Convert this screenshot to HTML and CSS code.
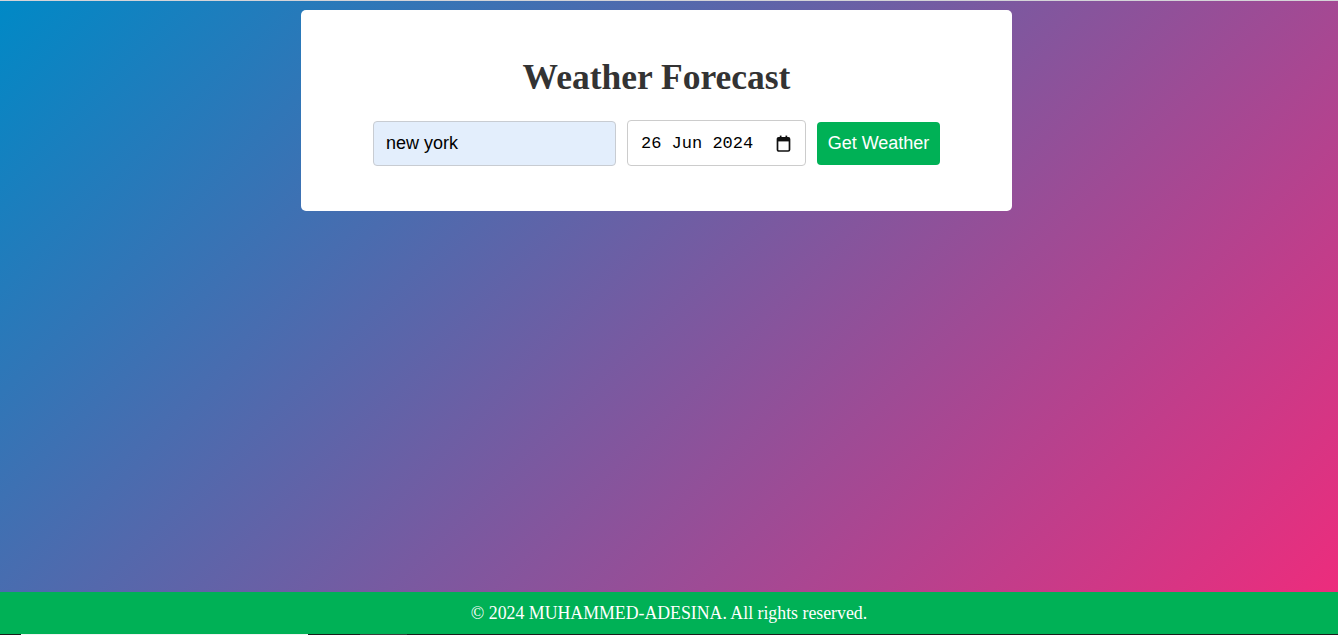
FILE: index.html
```html
<!DOCTYPE html>
<html lang="en">
<head>
<meta charset="utf-8">
<title>Weather Forecast</title>
<link rel="stylesheet" href="styles.css">
</head>
<body>
<div class="top-line"></div>
<main class="page">
  <section class="card">
    <h1 class="title">Weather Forecast</h1>
    <form class="search" onsubmit="return false">
      <input class="city" type="text" value="new york">
      <label class="date">
        <span class="date-text">26 Jun 2024</span>
        <svg class="cal" width="15" height="17" viewBox="0 0 15 17" aria-hidden="true">
          <rect x="1.5" y="2.8" width="12" height="13.2" rx="1.3" fill="none" stroke="#111" stroke-width="1.7"/>
          <rect x="1.5" y="2.8" width="12" height="3.6" fill="#111"/>
          <rect x="3.8" y="0.6" width="1.7" height="3" fill="#111"/>
          <rect x="9.5" y="0.6" width="1.7" height="3" fill="#111"/>
        </svg>
      </label>
      <button class="go" type="submit">Get Weather</button>
    </form>
  </section>
</main>
<footer class="footer">
  <div class="footer-bar">© 2024 MUHAMMED-ADESINA. All rights reserved.</div>
  <div class="footer-strip"></div>
</footer>
</body>
</html>
```

FILE: styles.css
```css
html, body {
  margin: 0;
  padding: 0;
  height: 100%;
}
body {
  display: flex;
  flex-direction: column;
  height: 635px;
  overflow: hidden;
  background: linear-gradient(135deg, #0089c6, #f22a7b);
  font-family: "Liberation Serif", "Times New Roman", serif;
}
.top-line {
  height: 1px;
  background: #d4d4d8;
  flex: none;
}
.page {
  flex: 1;
  display: flex;
  justify-content: center;
  align-items: flex-start;
  padding: 9px 25px 0 0;
}
.card {
  width: 711px;
  height: 201px;
  box-sizing: border-box;
  background: #fff;
  border-radius: 5px;
  padding: 20px;
  text-align: center;
}
.title {
  margin: 27px 0 22px;
  font-size: 35.5px;
  line-height: 41px;
  font-weight: bold;
  color: #333;
}
.search {
  display: flex;
  justify-content: center;
  align-items: center;
  gap: 11px;
}
.city {
  box-sizing: border-box;
  width: 243px;
  height: 45px;
  padding: 0 12px;
  border: 1px solid #c8ccd2;
  border-radius: 4px;
  background: #e3eefc;
  font-family: "Liberation Sans", Arial, sans-serif;
  font-size: 18px;
  color: #000;
}
.date {
  box-sizing: border-box;
  width: 179px;
  height: 46px;
  padding: 0 14px 0 13px;
  border: 1px solid #ccc;
  border-radius: 4px;
  background: #fff;
  display: flex;
  align-items: center;
  justify-content: space-between;
  font-family: "Liberation Mono", "DejaVu Sans Mono", monospace;
  font-size: 17px;
  color: #000;
}
.cal {
  display: block;
}
.go {
  box-sizing: border-box;
  width: 123px;
  height: 43px;
  padding: 0 10px;
  border: none;
  border-radius: 4px;
  background: #00b156;
  color: #fff;
  font-family: "Liberation Sans", Arial, sans-serif;
  font-size: 18px;
}
.footer {
  flex: none;
  display: flex;
  flex-direction: column;
}
.footer-bar {
  height: 42px;
  background: #00b156;
  color: #fff;
  font-size: 17.8px;
  display: flex;
  align-items: center;
  justify-content: center;
}
.footer-strip {
  height: 1px;
  background: linear-gradient(90deg,
    #1c1c1c 0 21px, #f2f2f2 21px 308px, #1c1c1c 308px 360px,
    #3c3c3c 360px 407px, #1c1c1c 407px);
}
```
